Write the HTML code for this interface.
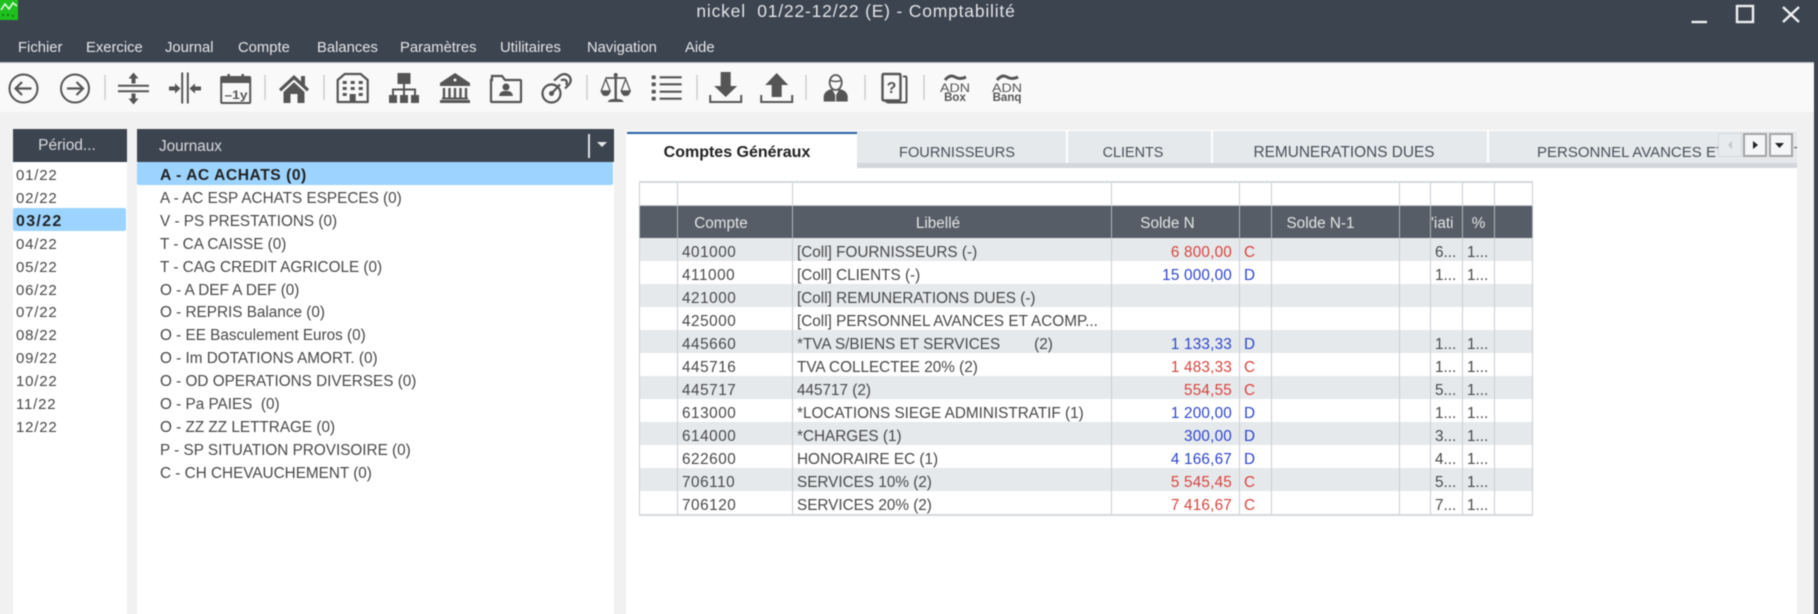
<!DOCTYPE html>
<html lang="fr"><head><meta charset="utf-8"><title>Comptabilité</title>
<style>
html,body{margin:0;padding:0;width:1818px;height:614px;overflow:hidden;background:#3c4450}
#w{position:relative;width:1818px;height:614px;font:15.3px/23px "Liberation Sans",sans-serif;color:#484848;filter:blur(.45px)}
.a{position:absolute}
.t{position:absolute;white-space:nowrap}
.m{top:37px;color:#e4e6e8;font-size:14.8px;line-height:22px}
.hd{background:#3c4450;color:#d8dadd}
.r{position:absolute;left:0;right:0;height:23px;line-height:23px;white-space:nowrap}
.p{font-size:15px;letter-spacing:.8px}
.tab{position:absolute;top:141px;line-height:24px;color:#484f58;font-size:15px;white-space:nowrap;transform:translateX(-50%)}
.sp{position:absolute;top:130px;height:33px;width:2px;background:#fff}
table{position:absolute;left:639px;top:181px;width:893px;border-collapse:collapse;table-layout:fixed;font-size:15.3px;color:#484848}
td,th{padding:0 4px;height:23px;line-height:23px;border-left:1px solid #c9cdd1;border-right:1px solid #c9cdd1;white-space:nowrap;overflow:hidden;box-sizing:border-box;font-weight:normal}
tbody td{padding-top:7px;line-height:16px}
tr.top td{border-top:2px solid #d5d8db;border-bottom:1px solid #c9cdd1}
tr.h th{height:33px;padding-top:4px;background:#565d66;color:#e2e4e6;border-color:#aeb3b8;text-align:center}
tbody tr:nth-child(even) td{background:#e6e9ec}
tbody td:nth-child(2){letter-spacing:.55px}
tr.l td{border-bottom:2px solid #d5d8db}
.n{text-align:right;padding-right:7px;letter-spacing:.2px}.R{color:#d8443c}.B{color:#2c46cc}
</style></head><body><div id="w">
<div class="a" style="left:-10px;top:-10px;width:28px;height:30px;background:#1fc01f"></div>
<svg class="a" style="left:0;top:0" width="18" height="20"><path d="M1 10 5 4l4 5 4-6 4 3" fill="none" stroke="#eafbe8" stroke-width="1.5"/><path d="M2 15h2m3 0h2m3 1h2" stroke="#0d800d" stroke-width="2"/></svg>
<div class="t" style="left:656px;top:0;width:400px;text-align:center;color:#e2e4e6;font-size:17.5px;letter-spacing:.8px;line-height:22px;white-space:pre">nickel  01/22-12/22 (E) - Comptabilité</div>
<div class="t m" style="left:18px">Fichier</div><div class="t m" style="left:86px">Exercice</div><div class="t m" style="left:165px">Journal</div><div class="t m" style="left:238px">Compte</div><div class="t m" style="left:317px">Balances</div><div class="t m" style="left:400px">Paramètres</div><div class="t m" style="left:500px">Utilitaires</div><div class="t m" style="left:587px">Navigation</div><div class="t m" style="left:685px">Aide</div>
<svg class="a" style="left:1680px;top:0" width="130" height="30" fill="none" stroke="#eef0f2" stroke-width="2.4"><path d="M11.500 22H27"/><rect x="57" y="6" width="16" height="16"/><path d="M103 7l16 15M119 7l-16 15"/></svg>
<div class="a" style="left:-10px;top:62px;width:1824px;height:572px;background:#f1f1f1"></div>
<div class="a" style="left:-10px;top:62px;width:1824px;height:50px;background:#f9f9f9;border-top:1px solid #b6bcc4;box-sizing:border-box"></div>

<svg class="a" style="left:0;top:62px" width="1818" height="55" viewBox="0 62 1818 55" fill="none" stroke="#555" stroke-width="2">
<g stroke="#cfcfcf" stroke-width="1.500"><path d="M105 75v25M265 75v25M324 75v25M587 75v25M697 75v25M806 75v25M865 75v25M924 75v25"/></g>
<g transform="translate(23.500 88.500)"><circle r="14"/><path d="M8 0H-8M-1.500-6.500-8 0l6.500 6.500" stroke-width="2.200"/></g>
<g transform="translate(75 88.500)"><circle r="14"/><path d="M-8 0H8M1.500-6.500 8 0l-6.500 6.500" stroke-width="2.200"/></g>
<g transform="translate(133.500 88.500)"><path d="M-15.500-2.800h31M-15.500 2.800h31"/><path fill="#555" stroke="none" d="M0-16-5-10H-2V-5H2V-10H5ZM0 16-5 10H-2V5H2V10H5Z"/></g>
<g transform="translate(185 88.500)"><path d="M-2.800-16v31M2.800-16v31"/><path fill="#555" stroke="none" d="M-4.500 0-10-5V-2H-16V2H-10V5ZM4.500 0 10-5V-2H16V2H10V5Z"/></g>
<g transform="translate(235.700 89)"><rect x="-14.500" y="-12" width="29" height="26" rx="1"/><path d="M-15-12H15V-6H-15Z" fill="#555" stroke="none"/><path d="M-7-15v5M7-15v5" stroke-width="2.500"/></g>
<text x="236" y="99" text-anchor="middle" font-family="Liberation Sans" font-size="12" font-weight="bold" fill="#555" stroke="none" textLength="23" lengthAdjust="spacingAndGlyphs">–1y</text>
<path transform="translate(294 89)" fill="#555" stroke="none" d="M0-14-15 0-13 2.500 0-9.500 13 2.500 15 0 11-3.700V-13H7V-7.500ZM-10.500 3 0-6.800 10.500 3V14H3.500V5H-3.500V14H-10.500Z"/>
<g transform="translate(352.700 88)"><path d="M-15-8-8-14H8L15-8V14H-15Z" stroke-width="2.200" stroke-linejoin="round"/><path d="M-10-7h4v3h-4zM-2-7h4v3h-4zM6-7h4v3h-4zM-10-1h4v3h-4zM-2-1h4v3h-4zM6-1h4v3h-4zM-10 5h4v3h-4zM6 5h4v3h-4zM-3 6H3V14H-3Z" fill="#555" stroke="none"/></g>
<g transform="translate(404 88)"><path d="M-6.500-15H6.500V-4H-6.500ZM-15 7H-7V15H-15ZM-4 7H4V15H-4ZM7 7H15V15H7Z" fill="#555" stroke="none"/><path d="M0-4V7M-11 7V1.500H11V7"/></g>
<g transform="translate(455 88)"><path d="M0-15-15-5V-2H15V-5Z" fill="#555" stroke="none"/><path d="M-11 0V10M-5.500 0V10M0 0V10M5.500 0V10M11 0V10" stroke-width="2.400"/><path d="M-13 9.500H13V11.500H-13ZM-15 12H15V15H-15Z" fill="#555" stroke="none"/><circle cy="-8" r="1.500" fill="#f9f9f9" stroke="none"/></g>
<g transform="translate(506 89)"><path d="M-14-9V-13H-4L-1-9H14Q15-9 15-8V12Q15 13 14 13H-14Q-15 13-15 12V-9Z" stroke-width="2.200"/><circle cy="-2" r="3.500" fill="#555" stroke="none"/><path d="M-7 7Q-6 2-2 2H2Q6 2 7 7Z" fill="#555" stroke="none"/></g>
<g transform="translate(557 88)" stroke-width="2.200"><circle cx="-5.500" cy="5.500" r="9"/><path d="M-5.500 5.500 3-3.500"/><circle cx="-5.500" cy="5.500" r="2.500" fill="#555" stroke="none"/><path d="M-3-7.500 3-12.500Q8-15.500 12-12 15.500-8 12-3.500L8 .5"/><path d="M4-7.500Q7.500-9.500 9.500-7 10.500-5 9-3"/></g>
<g transform="translate(615.700 88)"><path d="M0-14V12" stroke-width="2.400"/><path d="M-10-10H10" stroke-width="1.800"/><path d="M-8 14Q-7 11-2 11H2Q7 11 8 14Z" fill="#555" stroke="none"/><path d="M-10-9-14.500 3H-5.500ZM10-9 14.500 3H5.500Z" stroke-width="1.300"/><path d="M-15 3H-5Q-6 8-10 8-14 8-15 3ZM5 3H15Q14 8 10 8 6 8 5 3Z" fill="#555" stroke="none"/><circle cy="-13" r="2" fill="#555" stroke="none"/></g>
<g transform="translate(651.700 0)" stroke-width="2.200"><path d="M8 77.300H30M8 84.300H30M8 91.700H30M8 98.700H30"/><path d="M0 75.500h4v3.600h-4zM0 82.500h4v3.600h-4zM0 89.900h4v3.600h-4zM0 96.900h4v3.600h-4z" fill="#555" stroke="none"/></g>
<g transform="translate(725.700 88)"><path d="M-5-16H5V-2H11.500L0 9-11.500-2H-5Z" fill="#555" stroke="none"/><path d="M-15.500 7V14H15.500V7"/></g>
<g transform="translate(776.700 88)"><path d="M-5 9H5V-3H11.500L0-15-11.500-3H-5Z" fill="#555" stroke="none"/><path d="M-15.500 7V14H15.500V7"/></g>
<g transform="translate(835.700 88)"><ellipse cy="-5.500" rx="6" ry="7.500" stroke-width="1.800"/><path d="M-6-8Q0-5 6-8" stroke-width="1.400"/><path d="M-11.500 13V8Q-10.500 3-4 1.500L-1 7V13ZM11.500 13V8Q10.500 3 4 1.500L1 7V13Z" fill="#555" stroke="#555" stroke-width="1"/></g>
<g><path d="M884 74H899Q900.500 74 900.500 75.500V99Q900.500 100.500 899 100.500H884Q882.500 100.500 882.500 99V75.500Q882.500 74 884 74Z" stroke-width="2.400"/><path d="M903 76.500H905.500Q906.500 76.500 906.500 78V101.500Q906.500 102.500 905.500 102.500H889Q887 102.500 886 101.500" stroke-width="2"/></g>
<text x="891.500" y="93" text-anchor="middle" font-family="Liberation Sans" font-size="16" font-weight="bold" fill="#555" stroke="none">?</text>
<g stroke-width="3"><path d="M945 80Q950 74 955 77T966 77"/><path d="M997 80Q1002 74 1007 77T1018 77"/></g>
<g font-family="Liberation Sans" fill="#555" stroke="none" text-anchor="middle"><text x="955" y="92" font-size="12" textLength="30" lengthAdjust="spacingAndGlyphs">ADN</text><text x="955" y="101" font-size="11.500" font-weight="bold">Box</text><text x="1007" y="92" font-size="12" textLength="30" lengthAdjust="spacingAndGlyphs">ADN</text><text x="1007" y="101" font-size="11.500" font-weight="bold">Banq</text></g>
</svg>

<div class="a" style="left:13px;top:129px;width:114px;height:505px;background:#fff"></div>
<div class="a hd" style="left:13px;top:129px;width:114px;height:33px;line-height:34px;text-align:center;padding-right:6px;box-sizing:border-box;font-size:15.5px">Périod...</div>
<div class="a" style="left:13px;top:208px;width:113px;height:23px;background:#9cd4ff;border-radius:2px"></div>
<div class="a p" style="left:16px;top:162.500px;width:110px;height:300px">
<div class="r" style="top:1.500px">01/22</div><div class="r" style="top:24.400px">02/22</div><div class="r" style="top:47.300px;font-weight:bold;color:#222;font-size:16px;letter-spacing:1.300px">03/22</div><div class="r" style="top:70.200px">04/22</div><div class="r" style="top:93.100px">05/22</div><div class="r" style="top:116px">06/22</div><div class="r" style="top:138.900px">07/22</div><div class="r" style="top:161.800px">08/22</div><div class="r" style="top:184.700px">09/22</div><div class="r" style="top:207.600px">10/22</div><div class="r" style="top:230.500px">11/22</div><div class="r" style="top:253.400px">12/22</div></div>

<div class="a" style="left:137px;top:129px;width:477px;height:505px;background:#fff"></div>
<div class="a hd" style="left:137px;top:129px;width:477px;height:33px;line-height:35px;padding-left:22px;box-sizing:border-box">Journaux</div>
<div class="a" style="left:588px;top:134px;width:2px;height:24px;background:#dfe1e3"></div>
<svg class="a" style="left:596px;top:141px" width="14" height="8"><path d="M1 1h10L6 6Z" fill="#e6e8ea"/></svg>
<div class="a" style="left:137px;top:162px;width:476px;height:23px;background:#9cd4ff;border-radius:2px"></div>
<div class="a" style="left:160px;top:162.500px;width:450px;height:320px">
<div class="r" style="top:1px;font-weight:bold;color:#222;font-size:15.7px;letter-spacing:.5px">A - AC ACHATS (0)</div>
<div class="r" style="top:24.400px">A - AC ESP ACHATS ESPECES (0)</div>
<div class="r" style="top:47.300px">V - PS PRESTATIONS (0)</div>
<div class="r" style="top:70.200px">T - CA CAISSE (0)</div>
<div class="r" style="top:93.100px">T - CAG CREDIT AGRICOLE (0)</div>
<div class="r" style="top:116px">O - A DEF A DEF (0)</div>
<div class="r" style="top:138.900px">O - REPRIS Balance (0)</div>
<div class="r" style="top:161.800px">O - EE Basculement Euros (0)</div>
<div class="r" style="top:184.700px">O - Im DOTATIONS AMORT. (0)</div>
<div class="r" style="top:207.600px">O - OD OPERATIONS DIVERSES (0)</div>
<div class="r" style="top:230.500px;white-space:pre">O - Pa PAIES  (0)</div>
<div class="r" style="top:253.400px">O - ZZ ZZ LETTRAGE (0)</div>
<div class="r" style="top:276.300px">P - SP SITUATION PROVISOIRE (0)</div>
<div class="r" style="top:299.200px">C - CH CHEVAUCHEMENT (0)</div>
</div>

<div class="a" style="left:626px;top:130px;width:1171px;height:504px;background:#fff"></div>
<div class="a" style="left:627px;top:131px;width:1170px;height:32px;background:#e6e9ec"></div>
<div class="a" style="left:627px;top:163px;width:1170px;height:5px;background:#d3d6da"></div>
<div class="a" style="left:627px;top:132px;width:230px;height:37px;background:#fff;border-top:2px solid #2a62a8;box-sizing:border-box"></div>
<div class="tab" style="left:737px;font-weight:bold;color:#222;font-size:16px">Comptes Généraux</div>
<div class="tab" style="left:957px;font-size:14.6px">FOURNISSEURS</div>
<div class="tab" style="left:1133px;font-size:14.4px">CLIENTS</div>
<div class="tab" style="left:1344px;font-size:15.4px">REMUNERATIONS DUES</div>
<div class="tab" style="left:1537px;transform:none;width:181px;overflow:hidden">PERSONNEL AVANCES ET ACOMPTES</div>
<div class="sp" style="left:1066px"></div><div class="sp" style="left:1211px"></div><div class="sp" style="left:1487px"></div>
<div class="a" style="left:1718px;top:133px;width:24px;height:24px;background:#e8ebee;border:1px solid #d6d9dc;box-sizing:border-box"></div>
<div class="a" style="left:1743px;top:133px;width:24px;height:24px;background:#f5f6f7;border:2px solid #a4a4a4;box-sizing:border-box"></div>
<div class="a" style="left:1769px;top:133px;width:24px;height:24px;background:#f5f6f7;border:2px solid #a4a4a4;box-sizing:border-box"></div>
<svg class="a" style="left:1718px;top:133px" width="76" height="24"><path d="M14 8v8l-4-4Z" fill="#c4c7ca"/><path d="M35 8v8l5-4Z" fill="#222"/><path d="M57 10h9l-4.500 5Z" fill="#222"/></svg>
<div class="t" style="left:1794px;top:141px;line-height:24px;color:#484f58;width:3px;overflow:hidden;font-size:15px">T</div>

<table><colgroup><col style="width:38px"><col style="width:115px"><col style="width:319px"><col style="width:128px"><col style="width:32px"><col style="width:128px"><col style="width:31px"><col style="width:32px"><col style="width:32px"><col style="width:38px"></colgroup>
<thead><tr class="top"><td></td><td></td><td></td><td></td><td></td><td></td><td></td><td></td><td></td><td></td></tr>
<tr class="h"><th></th><th style="padding-right:32px">Compte</th><th style="padding-right:32px">Libellé</th><th style="padding-right:20px">Solde N</th><th></th><th style="padding-right:34px">Solde N-1</th><th></th><th style="padding:4px 0 0;text-align:left">'iati</th><th>%</th><th></th></tr></thead>
<tbody>
<tr style="display:none"></tr>
<tr><td></td><td>401000</td><td>[Coll] FOURNISSEURS (-)</td><td class="n R">6 800,00</td><td class="R">C</td><td></td><td></td><td>6...</td><td>1...</td><td></td></tr>
<tr><td></td><td>411000</td><td>[Coll] CLIENTS (-)</td><td class="n B">15 000,00</td><td class="B">D</td><td></td><td></td><td>1...</td><td>1...</td><td></td></tr>
<tr><td></td><td>421000</td><td>[Coll] REMUNERATIONS DUES (-)</td><td></td><td></td><td></td><td></td><td></td><td></td><td></td></tr>
<tr><td></td><td>425000</td><td>[Coll] PERSONNEL AVANCES ET ACOMP...</td><td></td><td></td><td></td><td></td><td></td><td></td><td></td></tr>
<tr><td></td><td>445660</td><td style="white-space:pre">*TVA S/BIENS ET SERVICES        (2)</td><td class="n B">1 133,33</td><td class="B">D</td><td></td><td></td><td>1...</td><td>1...</td><td></td></tr>
<tr><td></td><td>445716</td><td>TVA COLLECTEE 20% (2)</td><td class="n R">1 483,33</td><td class="R">C</td><td></td><td></td><td>1...</td><td>1...</td><td></td></tr>
<tr><td></td><td>445717</td><td>445717 (2)</td><td class="n R">554,55</td><td class="R">C</td><td></td><td></td><td>5...</td><td>1...</td><td></td></tr>
<tr><td></td><td>613000</td><td>*LOCATIONS SIEGE ADMINISTRATIF (1)</td><td class="n B">1 200,00</td><td class="B">D</td><td></td><td></td><td>1...</td><td>1...</td><td></td></tr>
<tr><td></td><td>614000</td><td>*CHARGES (1)</td><td class="n B">300,00</td><td class="B">D</td><td></td><td></td><td>3...</td><td>1...</td><td></td></tr>
<tr><td></td><td>622600</td><td>HONORAIRE EC (1)</td><td class="n B">4 166,67</td><td class="B">D</td><td></td><td></td><td>4...</td><td>1...</td><td></td></tr>
<tr><td></td><td>706110</td><td>SERVICES 10% (2)</td><td class="n R">5 545,45</td><td class="R">C</td><td></td><td></td><td>5...</td><td>1...</td><td></td></tr>
<tr class="l"><td></td><td>706120</td><td>SERVICES 20% (2)</td><td class="n R">7 416,67</td><td class="R">C</td><td></td><td></td><td>7...</td><td>1...</td><td></td></tr>
</tbody></table>
</div></body></html>
